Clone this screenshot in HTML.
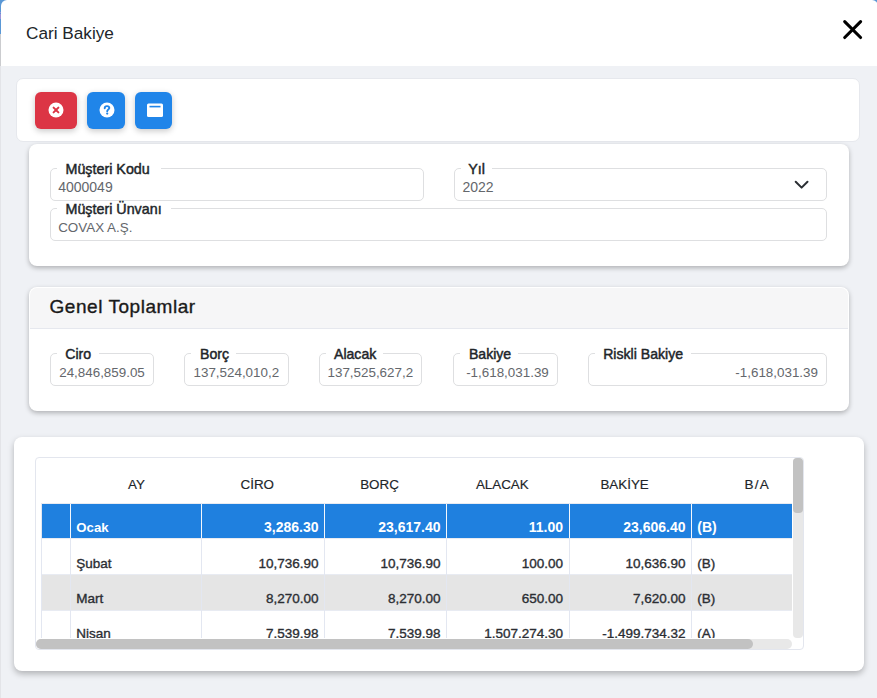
<!DOCTYPE html>
<html><head><meta charset="utf-8"><style>
*{box-sizing:border-box;margin:0;padding:0}
html,body{width:877px;height:698px;overflow:hidden;background:#eff1f5;font-family:"Liberation Sans",sans-serif;color:#212529}
.a{position:absolute}
.t{position:absolute;white-space:nowrap}
.card{position:absolute;background:#fff;border-radius:8px}
.btn{position:absolute;border-radius:6px;box-shadow:0 2px 6px rgba(0,0,0,.22)}
.fs{position:absolute;border:1px solid #dedfe1;border-radius:5px}
.lgb{position:absolute;background:#fff;height:6px}
.vl{position:absolute;width:1px}
.hl{position:absolute;height:1px}
</style></head><body>
<div class="a" style="left:0;top:0;width:1px;height:66px;background:#cbcccf"></div>
<div class="a" style="left:0;top:66px;width:1px;height:632px;background:#e3e4e8"></div>
<div class="a" style="left:0;top:0;width:1px;height:34px;background:#5a98d6"></div>
<div class="a" style="left:0;top:11px;width:1px;height:2px;background:#9c93d8"></div>
<div class="a" style="left:0;top:14px;width:1px;height:5px;background:#9c93d8"></div>
<div class="a" style="left:0;top:0;width:12px;height:12px;background:#5a98d6"></div>
<div class="a" style="left:865px;top:0;width:12px;height:12px;background:#5a98d6"></div>
<div class="a" style="left:1px;top:0;width:877px;height:66px;background:#fff;border-top-left-radius:6px;border-top-right-radius:6px"></div>
<div class="t" style="left:26.00px;top:24.74px;font-size:17.2px;line-height:17.2px;font-weight:400;color:#212529;">Cari Bakiye</div>
<svg class="a" style="left:841px;top:18px" width="23" height="23" viewBox="0 0 23 23"><path d="M3.7 3.6L19.6 19.5M19.6 3.6L3.7 19.5" stroke="#000" stroke-width="3.1" stroke-linecap="round"/></svg>
<div class="card" style="left:16px;top:78px;width:844px;height:64px;border:1px solid #e6e8ed;border-radius:7px"></div>
<div class="btn" style="left:35px;top:92px;width:42px;height:37px;background:#dc3545"></div>
<div class="btn" style="left:87px;top:92px;width:38px;height:37px;background:#2085e9"></div>
<div class="btn" style="left:135px;top:92px;width:37px;height:37px;background:#2085e9"></div>
<svg class="a" style="left:48px;top:102.3px" width="16" height="16" viewBox="0 0 16 16"><circle cx="8" cy="8" r="7.5" fill="#fff"/><path d="M5.6 5.6L10.4 10.4M10.4 5.6L5.6 10.4" stroke="#dc3545" stroke-width="2" stroke-linecap="round"/></svg>
<svg class="a" style="left:99.2px;top:102px" width="16" height="16" viewBox="0 0 16 16"><circle cx="8" cy="8" r="7.5" fill="#fff"/><path d="M5.7 6.3C5.7 4.9 6.7 4.1 8 4.1C9.3 4.1 10.3 4.9 10.3 6.1C10.3 7.5 8.2 7.6 8.2 9.2" fill="none" stroke="#2085e9" stroke-width="1.9" stroke-linecap="round"/><circle cx="8.2" cy="11.6" r="1.1" fill="#2085e9"/></svg>
<svg class="a" style="left:146px;top:103px" width="18" height="15" viewBox="0 0 18 15"><rect x="1" y="0.5" width="16" height="13.5" rx="1.5" fill="#fff"/><rect x="3.5" y="2.8" width="11" height="1.6" fill="#2085e9"/></svg>
<div class="card" style="left:29px;top:144px;width:820px;height:122px;box-shadow:0 2px 5px rgba(0,0,0,.27)"></div>
<div class="fs" style="left:50px;top:168px;width:374px;height:33px"></div>
<div class="lgb" style="left:57px;top:166px;width:103.5px"></div>
<div class="t" style="left:65.50px;top:162.40px;font-size:14.3px;line-height:14.3px;font-weight:400;color:#212529;-webkit-text-stroke:0.45px currentColor;">Müşteri Kodu</div>
<div class="t" style="left:58.20px;top:180.25px;font-size:14px;line-height:14px;font-weight:400;color:#64676c;">4000049</div>
<div class="fs" style="left:454px;top:168px;width:373px;height:33px"></div>
<div class="lgb" style="left:461px;top:166px;width:30.5px"></div>
<div class="t" style="left:468.20px;top:162.40px;font-size:14.3px;line-height:14.3px;font-weight:400;color:#212529;-webkit-text-stroke:0.45px currentColor;">Yıl</div>
<div class="t" style="left:462.50px;top:180.25px;font-size:14px;line-height:14px;font-weight:400;color:#64676c;">2022</div>
<svg class="a" style="left:792.5px;top:178.5px" width="17" height="12" viewBox="0 0 17 12"><path d="M2.7 2.7L8.6 8.6L14.5 2.7" fill="none" stroke="#2a2e33" stroke-width="2" stroke-linecap="round" stroke-linejoin="round"/></svg>
<div class="fs" style="left:50px;top:208px;width:777px;height:33px"></div>
<div class="lgb" style="left:57px;top:206px;width:114px"></div>
<div class="t" style="left:65.50px;top:202.40px;font-size:14.3px;line-height:14.3px;font-weight:400;color:#212529;-webkit-text-stroke:0.45px currentColor;">Müşteri Ünvanı</div>
<div class="t" style="left:58.20px;top:220.66px;font-size:13.4px;line-height:13.4px;font-weight:400;color:#64676c;">COVAX A.Ş.</div>
<div class="card" style="left:29px;top:287px;width:820px;height:124px;box-shadow:0 2px 5px rgba(0,0,0,.27);overflow:hidden"><div class="a" style="left:1px;top:1px;width:818px;height:41px;background:#f6f6f7;border-bottom:1px solid #e6e8ee;border-top-left-radius:7px;border-top-right-radius:7px"></div></div>
<div class="t" style="left:49.50px;top:296.52px;font-size:19px;line-height:19px;font-weight:400;color:#1a1a1a;letter-spacing:0.55px;-webkit-text-stroke:0.35px currentColor;">Genel Toplamlar</div>
<div class="fs" style="left:50px;top:353px;width:104px;height:33px"></div>
<div class="lgb" style="left:57px;top:351px;width:42px"></div>
<div class="t" style="left:65.30px;top:347.46px;font-size:14.1px;line-height:14.1px;font-weight:400;color:#212529;-webkit-text-stroke:0.45px currentColor;">Ciro</div>
<div class="t" style="left:59.20px;top:366.06px;font-size:13.4px;line-height:13.4px;font-weight:400;color:#64676c;">24,846,859.05</div>
<div class="fs" style="left:184px;top:353px;width:105px;height:33px"></div>
<div class="lgb" style="left:191px;top:351px;width:44.69999999999999px"></div>
<div class="t" style="left:200.00px;top:347.46px;font-size:14.1px;line-height:14.1px;font-weight:400;color:#212529;-webkit-text-stroke:0.45px currentColor;">Borç</div>
<div class="t" style="left:193.50px;top:366.06px;font-size:13.4px;line-height:13.4px;font-weight:400;color:#64676c;">137,524,010,2</div>
<div class="fs" style="left:319px;top:353px;width:103px;height:33px"></div>
<div class="lgb" style="left:326px;top:351px;width:57px"></div>
<div class="t" style="left:334.00px;top:347.46px;font-size:14.1px;line-height:14.1px;font-weight:400;color:#212529;-webkit-text-stroke:0.45px currentColor;">Alacak</div>
<div class="t" style="left:327.50px;top:366.06px;font-size:13.4px;line-height:13.4px;font-weight:400;color:#64676c;">137,525,627,2</div>
<div class="fs" style="left:453px;top:353px;width:105px;height:33px"></div>
<div class="lgb" style="left:460px;top:351px;width:57.5px"></div>
<div class="t" style="left:468.90px;top:347.46px;font-size:14.1px;line-height:14.1px;font-weight:400;color:#212529;-webkit-text-stroke:0.45px currentColor;">Bakiye</div>
<div class="t" style="left:148.80px;width:400px;text-align:right;top:366.06px;font-size:13.4px;line-height:13.4px;font-weight:400;color:#64676c;">-1,618,031.39</div>
<div class="fs" style="left:588px;top:353px;width:239px;height:33px"></div>
<div class="lgb" style="left:595px;top:351px;width:96px"></div>
<div class="t" style="left:603.20px;top:347.46px;font-size:14.1px;line-height:14.1px;font-weight:400;color:#212529;-webkit-text-stroke:0.45px currentColor;">Riskli Bakiye</div>
<div class="t" style="left:418.00px;width:400px;text-align:right;top:366.06px;font-size:13.4px;line-height:13.4px;font-weight:400;color:#64676c;">-1,618,031.39</div>
<div class="card" style="left:14px;top:437px;width:850px;height:234px;box-shadow:0 3px 6px rgba(0,0,0,.26)"></div>
<div class="a" style="left:35px;top:457px;width:769px;height:193px;border:1px solid #e3e6ee;border-radius:4px;background:#fff"></div>
<div class="t" style="left:-63.50px;width:400px;text-align:center;top:477.86px;font-size:13.4px;line-height:13.4px;font-weight:400;color:#212529;-webkit-text-stroke:0.15px currentColor;">AY</div>
<div class="t" style="left:57.30px;width:400px;text-align:center;top:477.86px;font-size:13.4px;line-height:13.4px;font-weight:400;color:#212529;-webkit-text-stroke:0.15px currentColor;">CİRO</div>
<div class="t" style="left:179.50px;width:400px;text-align:center;top:477.86px;font-size:13.4px;line-height:13.4px;font-weight:400;color:#212529;-webkit-text-stroke:0.15px currentColor;">BORÇ</div>
<div class="t" style="left:302.30px;width:400px;text-align:center;top:477.86px;font-size:13.4px;line-height:13.4px;font-weight:400;color:#212529;-webkit-text-stroke:0.15px currentColor;">ALACAK</div>
<div class="t" style="left:424.60px;width:400px;text-align:center;top:477.86px;font-size:13.4px;line-height:13.4px;font-weight:400;color:#212529;-webkit-text-stroke:0.15px currentColor;">BAKİYE</div>
<div class="t" style="left:557.30px;width:400px;text-align:center;top:477.77px;font-size:13.5px;line-height:13.5px;font-weight:400;color:#212529;letter-spacing:1.2px;-webkit-text-stroke:0.15px currentColor;">B/A</div>
<div class="a" style="left:36px;top:500px;width:757px;height:138px;overflow:hidden">
<div class="a" style="left:5px;top:4px;width:751px;height:34px;background:#1f80df"></div>
<div class="a" style="left:5px;top:38px;width:751px;height:36px;background:#fff"></div>
<div class="a" style="left:5px;top:74px;width:751px;height:36px;background:#e5e5e5"></div>
<div class="a" style="left:5px;top:110px;width:751px;height:36px;background:#fff"></div>
<div class="hl" style="left:5px;top:3px;width:751px;background:#e8ebf2"></div>
<div class="hl" style="left:5px;top:38px;width:751px;background:#e8ebf2"></div>
<div class="hl" style="left:5px;top:74px;width:751px;background:#e8ebf2"></div>
<div class="hl" style="left:5px;top:110px;width:751px;background:#e8ebf2"></div>
<div class="vl" style="left:5px;top:3px;height:200px;background:#e3e7f1"></div>
<div class="vl" style="left:34px;top:3px;height:200px;background:#e3e7f1"></div>
<div class="vl" style="left:165px;top:3px;height:200px;background:#e3e7f1"></div>
<div class="vl" style="left:288px;top:3px;height:200px;background:#e3e7f1"></div>
<div class="vl" style="left:410px;top:3px;height:200px;background:#e3e7f1"></div>
<div class="vl" style="left:533px;top:3px;height:200px;background:#e3e7f1"></div>
<div class="vl" style="left:655px;top:3px;height:200px;background:#e3e7f1"></div>
<div class="vl" style="left:34px;top:4px;height:34px;background:#f4f7fc"></div>
<div class="vl" style="left:165px;top:4px;height:34px;background:#f4f7fc"></div>
<div class="vl" style="left:288px;top:4px;height:34px;background:#f4f7fc"></div>
<div class="vl" style="left:410px;top:4px;height:34px;background:#f4f7fc"></div>
<div class="vl" style="left:533px;top:4px;height:34px;background:#f4f7fc"></div>
<div class="vl" style="left:655px;top:4px;height:34px;background:#f4f7fc"></div>
<div class="t" style="left:40.30px;top:21.03px;font-size:13.2px;line-height:13.2px;font-weight:700;color:#fff;">Ocak</div>
<div class="t" style="left:-117.50px;width:400px;text-align:right;top:20.35px;font-size:14px;line-height:14px;font-weight:700;color:#fff;">3,286.30</div>
<div class="t" style="left:4.50px;width:400px;text-align:right;top:20.35px;font-size:14px;line-height:14px;font-weight:700;color:#fff;">23,617.40</div>
<div class="t" style="left:127.00px;width:400px;text-align:right;top:20.35px;font-size:14px;line-height:14px;font-weight:700;color:#fff;">11.00</div>
<div class="t" style="left:249.50px;width:400px;text-align:right;top:20.35px;font-size:14px;line-height:14px;font-weight:700;color:#fff;">23,606.40</div>
<div class="t" style="left:661.30px;top:20.35px;font-size:14px;line-height:14px;font-weight:700;color:#fff;">(B)</div>
<div class="t" style="left:40.30px;top:57.07px;font-size:13.5px;line-height:13.5px;font-weight:400;color:#2b2e33;-webkit-text-stroke:0.35px currentColor;">Şubat</div>
<div class="t" style="left:-117.50px;width:400px;text-align:right;top:57.07px;font-size:13.5px;line-height:13.5px;font-weight:400;color:#2b2e33;-webkit-text-stroke:0.35px currentColor;">10,736.90</div>
<div class="t" style="left:4.50px;width:400px;text-align:right;top:57.07px;font-size:13.5px;line-height:13.5px;font-weight:400;color:#2b2e33;-webkit-text-stroke:0.35px currentColor;">10,736.90</div>
<div class="t" style="left:127.00px;width:400px;text-align:right;top:57.07px;font-size:13.5px;line-height:13.5px;font-weight:400;color:#2b2e33;-webkit-text-stroke:0.35px currentColor;">100.00</div>
<div class="t" style="left:249.50px;width:400px;text-align:right;top:57.07px;font-size:13.5px;line-height:13.5px;font-weight:400;color:#2b2e33;-webkit-text-stroke:0.35px currentColor;">10,636.90</div>
<div class="t" style="left:661.30px;top:57.07px;font-size:13.5px;line-height:13.5px;font-weight:400;color:#2b2e33;-webkit-text-stroke:0.35px currentColor;">(B)</div>
<div class="t" style="left:40.30px;top:92.07px;font-size:13.5px;line-height:13.5px;font-weight:400;color:#2b2e33;-webkit-text-stroke:0.35px currentColor;">Mart</div>
<div class="t" style="left:-117.50px;width:400px;text-align:right;top:92.07px;font-size:13.5px;line-height:13.5px;font-weight:400;color:#2b2e33;-webkit-text-stroke:0.35px currentColor;">8,270.00</div>
<div class="t" style="left:4.50px;width:400px;text-align:right;top:92.07px;font-size:13.5px;line-height:13.5px;font-weight:400;color:#2b2e33;-webkit-text-stroke:0.35px currentColor;">8,270.00</div>
<div class="t" style="left:127.00px;width:400px;text-align:right;top:92.07px;font-size:13.5px;line-height:13.5px;font-weight:400;color:#2b2e33;-webkit-text-stroke:0.35px currentColor;">650.00</div>
<div class="t" style="left:249.50px;width:400px;text-align:right;top:92.07px;font-size:13.5px;line-height:13.5px;font-weight:400;color:#2b2e33;-webkit-text-stroke:0.35px currentColor;">7,620.00</div>
<div class="t" style="left:661.30px;top:92.07px;font-size:13.5px;line-height:13.5px;font-weight:400;color:#2b2e33;-webkit-text-stroke:0.35px currentColor;">(B)</div>
<div class="t" style="left:40.30px;top:127.17px;font-size:13.5px;line-height:13.5px;font-weight:400;color:#2b2e33;-webkit-text-stroke:0.35px currentColor;">Nisan</div>
<div class="t" style="left:-117.50px;width:400px;text-align:right;top:127.17px;font-size:13.5px;line-height:13.5px;font-weight:400;color:#2b2e33;-webkit-text-stroke:0.35px currentColor;">7,539.98</div>
<div class="t" style="left:4.50px;width:400px;text-align:right;top:127.17px;font-size:13.5px;line-height:13.5px;font-weight:400;color:#2b2e33;-webkit-text-stroke:0.35px currentColor;">7,539.98</div>
<div class="t" style="left:127.00px;width:400px;text-align:right;top:127.17px;font-size:13.5px;line-height:13.5px;font-weight:400;color:#2b2e33;-webkit-text-stroke:0.35px currentColor;">1,507,274.30</div>
<div class="t" style="left:249.50px;width:400px;text-align:right;top:127.17px;font-size:13.5px;line-height:13.5px;font-weight:400;color:#2b2e33;-webkit-text-stroke:0.35px currentColor;">-1,499,734.32</div>
<div class="t" style="left:661.30px;top:127.17px;font-size:13.5px;line-height:13.5px;font-weight:400;color:#2b2e33;-webkit-text-stroke:0.35px currentColor;">(A)</div>
</div>
<div class="a" style="left:793px;top:458px;width:10px;height:180px;background:#e8e8e8;border-radius:4px"></div>
<div class="a" style="left:793px;top:458px;width:10px;height:55px;background:#c2c2c2;border-radius:4px"></div>
<div class="a" style="left:36px;top:639px;width:756px;height:10px;background:#e8e8e8;border-radius:5px"></div>
<div class="a" style="left:36px;top:639px;width:717px;height:10px;background:#c2c2c2;border-radius:5px"></div>
</body></html>
